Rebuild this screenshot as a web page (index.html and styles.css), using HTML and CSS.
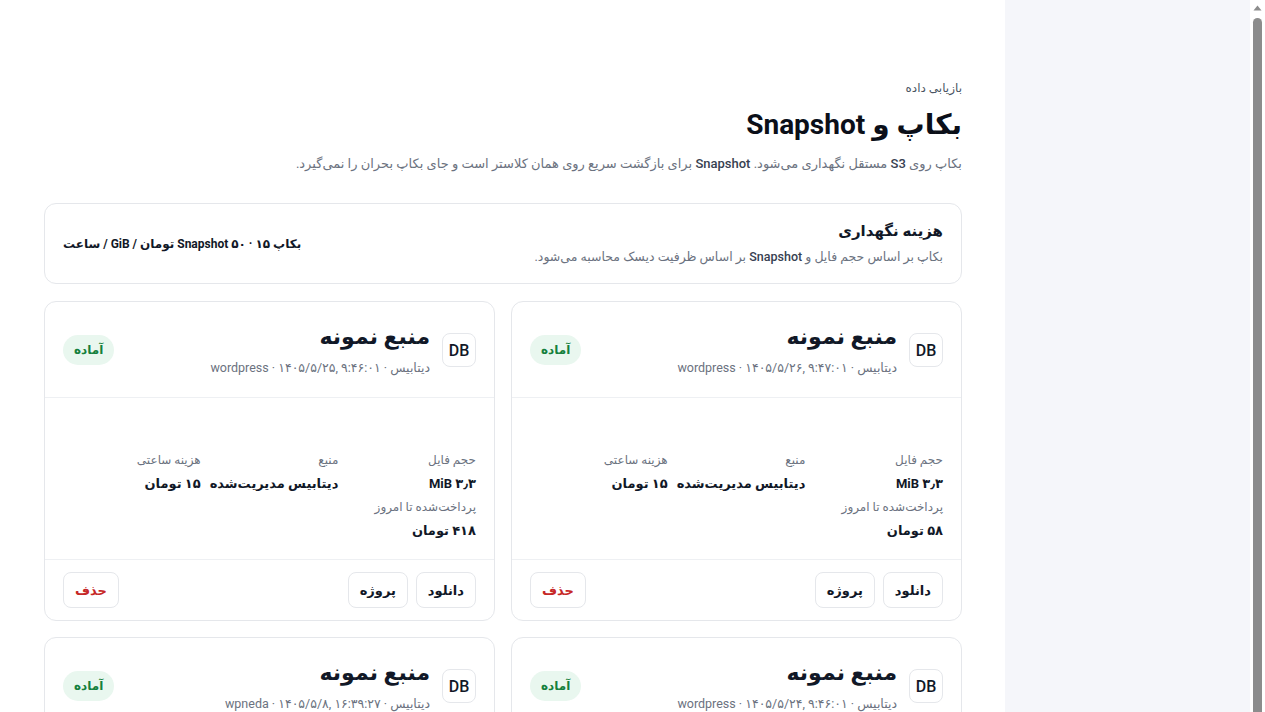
FILE: index.html
```html
<!DOCTYPE html>
<html lang="fa" dir="rtl">
<head>
  <meta charset="UTF-8">
  <meta name="viewport" content="width=device-width, initial-scale=1.0">
  <title>بکاپ و Snapshot</title>
  <link rel="stylesheet" href="styles.css">
</head>
<body>
  <div class="layout">
    <aside class="sidebar"></aside>
    <main class="main">
      <div class="eyebrow">بازیابی داده</div>
      <h1 class="page-title">بکاپ و Snapshot</h1>
      <p class="page-desc">بکاپ روی <span class="latin">S3</span> مستقل نگهداری می‌شود. <span class="latin">Snapshot</span> برای بازگشت سریع روی همان کلاستر است و جای بکاپ بحران را نمی‌گیرد.</p>

      <div class="cost-card">
        <div class="cost-info">
          <h3>هزینه نگهداری</h3>
          <p>بکاپ بر اساس حجم فایل و <span class="latin">Snapshot</span> بر اساس ظرفیت دیسک محاسبه می‌شود.</p>
        </div>
        <div class="cost-rate">بکاپ ۱۵ · Snapshot ۵۰ تومان / GiB / ساعت</div>
      </div>

      <div class="backup-grid">
        <div class="backup-card">
          <div class="card-head">
            <div class="db-icon">DB</div>
            <div class="card-title">
              <h2>منبع نمونه</h2>
              <div class="card-meta">دیتابیس · <span class="ltr">۱۴۰۵/۵/۲۶, ۹:۴۷:۰۱</span> · wordpress</div>
            </div>
            <span class="badge">آماده</span>
          </div>
          <div class="card-body">
            <div class="stat"><span class="label">حجم فایل</span><span class="value">۳٫۳ MiB</span></div>
            <div class="stat"><span class="label">منبع</span><span class="value">دیتابیس مدیریت‌شده</span></div>
            <div class="stat"><span class="label">هزینه ساعتی</span><span class="value">۱۵ تومان</span></div>
            <div class="stat"><span class="label">پرداخت‌شده تا امروز</span><span class="value">۵۸ تومان</span></div>
          </div>
          <div class="card-foot">
            <button class="btn">دانلود</button>
            <button class="btn">پروژه</button>
            <button class="btn btn-danger">حذف</button>
          </div>
        </div>

        <div class="backup-card">
          <div class="card-head">
            <div class="db-icon">DB</div>
            <div class="card-title">
              <h2>منبع نمونه</h2>
              <div class="card-meta">دیتابیس · <span class="ltr">۱۴۰۵/۵/۲۵, ۹:۴۶:۰۱</span> · wordpress</div>
            </div>
            <span class="badge">آماده</span>
          </div>
          <div class="card-body">
            <div class="stat"><span class="label">حجم فایل</span><span class="value">۳٫۳ MiB</span></div>
            <div class="stat"><span class="label">منبع</span><span class="value">دیتابیس مدیریت‌شده</span></div>
            <div class="stat"><span class="label">هزینه ساعتی</span><span class="value">۱۵ تومان</span></div>
            <div class="stat"><span class="label">پرداخت‌شده تا امروز</span><span class="value">۴۱۸ تومان</span></div>
          </div>
          <div class="card-foot">
            <button class="btn">دانلود</button>
            <button class="btn">پروژه</button>
            <button class="btn btn-danger">حذف</button>
          </div>
        </div>

        <div class="backup-card">
          <div class="card-head">
            <div class="db-icon">DB</div>
            <div class="card-title">
              <h2>منبع نمونه</h2>
              <div class="card-meta">دیتابیس · <span class="ltr">۱۴۰۵/۵/۲۴, ۹:۴۶:۰۱</span> · wordpress</div>
            </div>
            <span class="badge">آماده</span>
          </div>
          <div class="card-body">
            <div class="stat"><span class="label">حجم فایل</span><span class="value">۳٫۳ MiB</span></div>
            <div class="stat"><span class="label">منبع</span><span class="value">دیتابیس مدیریت‌شده</span></div>
            <div class="stat"><span class="label">هزینه ساعتی</span><span class="value">۱۵ تومان</span></div>
            <div class="stat"><span class="label">پرداخت‌شده تا امروز</span><span class="value">۷۷۸ تومان</span></div>
          </div>
          <div class="card-foot">
            <button class="btn">دانلود</button>
            <button class="btn">پروژه</button>
            <button class="btn btn-danger">حذف</button>
          </div>
        </div>

        <div class="backup-card">
          <div class="card-head">
            <div class="db-icon">DB</div>
            <div class="card-title">
              <h2>منبع نمونه</h2>
              <div class="card-meta">دیتابیس · <span class="ltr">۱۴۰۵/۵/۸, ۱۶:۳۹:۲۷</span> · wpneda</div>
            </div>
            <span class="badge">آماده</span>
          </div>
          <div class="card-body">
            <div class="stat"><span class="label">حجم فایل</span><span class="value">۱٫۲ MiB</span></div>
            <div class="stat"><span class="label">منبع</span><span class="value">دیتابیس مدیریت‌شده</span></div>
            <div class="stat"><span class="label">هزینه ساعتی</span><span class="value">۱۵ تومان</span></div>
            <div class="stat"><span class="label">پرداخت‌شده تا امروز</span><span class="value">۶٬۴۸۰ تومان</span></div>
          </div>
          <div class="card-foot">
            <button class="btn">دانلود</button>
            <button class="btn">پروژه</button>
            <button class="btn btn-danger">حذف</button>
          </div>
        </div>
      </div>
    </main>
    <div class="scrollbar" aria-hidden="true">
      <svg class="scroll-arrow" width="9" height="6" viewBox="0 0 9 6"><path d="M4.5 0.5 L8.5 5.5 L0.5 5.5 Z" fill="#8c8c8c"/></svg>
      <div class="scroll-thumb"></div>
    </div>
  </div>
</body>
</html>
```

FILE: styles.css
```css
body {
  margin: 0;
  overflow: hidden;
  font-family: Roboto, "DejaVu Sans", sans-serif;
  color: #111827;
  background-color: #fff;
}
.layout {
  display: flex;
  height: 100vh;
  overflow: hidden;
  direction: ltr;
}
.layout > * {
  direction: rtl;
}
.main {
  width: 1005px;
  flex-shrink: 0;
  box-sizing: border-box;
  padding: 79px 43px 40px 44px;
}
.sidebar {
  order: 2;
  flex: 1;
  background-color: #f5f6fa;
}
.scrollbar {
  order: 3;
  width: 15px;
  flex-shrink: 0;
  background-color: #fff;
  display: flex;
  flex-direction: column;
  align-items: center;
  padding-top: 5px;
  box-sizing: border-box;
}
.scroll-arrow {
  display: block;
  margin-bottom: 7px;
}
.scroll-thumb {
  flex: 1;
  width: 9px;
  border-radius: 5px 5px 0 0;
  background-color: #8c8c8c;
}
.eyebrow {
  font-size: 12px;
  line-height: 18px;
  color: #4b5563;
}
.page-title {
  margin: 10px 0 0;
  font-size: 28px;
  line-height: 36px;
  font-weight: 700;
  color: #0b0f19;
}
.page-desc {
  margin: 10px 0 0;
  font-size: 13px;
  line-height: 22px;
  color: #6b7280;
}
.latin {
  color: #374151;
  font-weight: 500;
}
.cost-card {
  display: flex;
  justify-content: space-between;
  align-items: center;
  margin-top: 28px;
  padding: 16px 18px;
  border: 1px solid #e5e7eb;
  border-radius: 12px;
}
.cost-info h3 {
  margin: 0;
  font-size: 15px;
  line-height: 22px;
  font-weight: 700;
}
.cost-info p {
  margin: 5px 0 0;
  font-size: 12.5px;
  line-height: 20px;
  color: #6b7280;
}
.cost-rate {
  font-size: 12px;
  font-weight: 700;
  color: #111827;
}
.backup-grid {
  display: grid;
  grid-template-columns: 1fr 1fr;
  gap: 16px;
  margin-top: 17px;
}
.backup-card {
  border: 1px solid #e5e7eb;
  border-radius: 12px;
  display: flex;
  flex-direction: column;
}
.card-head {
  display: flex;
  align-items: center;
  gap: 12px;
  padding: 20px 18px 19px;
  border-bottom: 1px solid #eef0f3;
}
.db-icon {
  width: 32px;
  height: 32px;
  border: 1px solid #e5e7eb;
  border-radius: 8px;
  display: flex;
  align-items: center;
  justify-content: center;
  font-size: 16px;
  font-weight: 500;
  color: #111827;
}
.card-title {
  flex: 1;
}
.card-title h2 {
  margin: 0;
  font-size: 22px;
  line-height: 30px;
  font-weight: 700;
}
.card-meta {
  margin-top: 6px;
  font-size: 12.5px;
  line-height: 20px;
  color: #6b7280;
}
.ltr {
  direction: ltr;
  unicode-bidi: isolate;
}
.badge {
  padding: 0 11px;
  height: 30px;
  line-height: 30px;
  border-radius: 15px;
  background-color: #e9f7ef;
  color: #15803d;
  font-size: 12px;
  font-weight: 700;
}
.card-body {
  display: grid;
  grid-template-columns: repeat(3, 1fr);
  row-gap: 3px;
  padding: 52px 18px 18px;
  flex: 1;
}
.stat {
  display: flex;
  flex-direction: column;
  gap: 4px;
}
.label {
  font-size: 12px;
  line-height: 20px;
  color: #6b7280;
}
.value {
  font-size: 13px;
  line-height: 20px;
  font-weight: 700;
  color: #111827;
}
.card-foot {
  display: flex;
  gap: 8px;
  padding: 12px 18px;
  border-top: 1px solid #eef0f3;
}
.btn {
  height: 36px;
  padding: 0 11px;
  border: 1px solid #e5e7eb;
  border-radius: 8px;
  background-color: #fff;
  font-family: inherit;
  font-size: 13px;
  font-weight: 700;
  color: #111827;
  cursor: pointer;
}
.btn-danger {
  margin-right: auto;
  color: #c62828;
}
```
